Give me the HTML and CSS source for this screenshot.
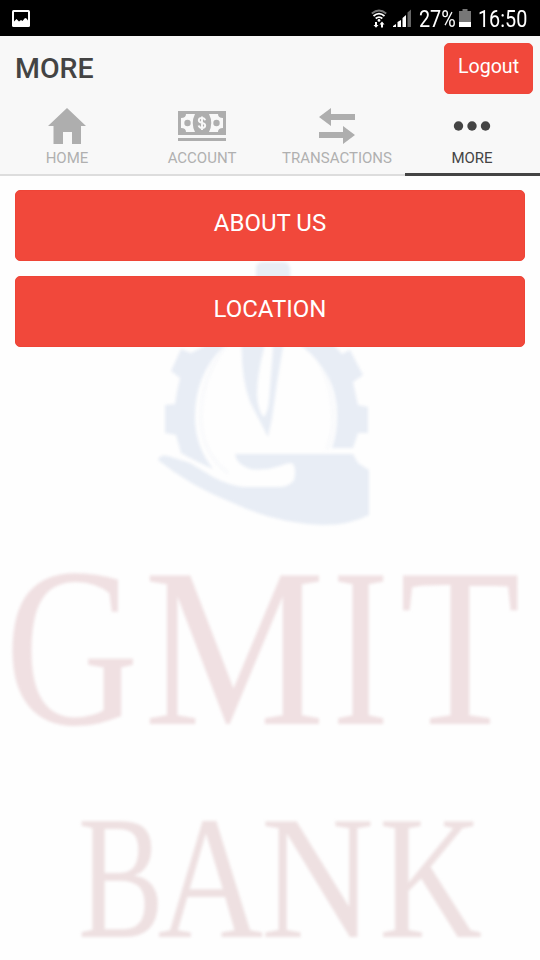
FILE: index.html
```html
<!DOCTYPE html>
<html lang="en">
<head>
<meta charset="utf-8">
<title>GMIT Bank</title>
<link rel="stylesheet" href="styles.css">
</head>
<body>
<div class="statusbar">
  <svg class="photo" viewBox="0 0 18 18"><rect x="0" y="0" width="18" height="17" rx="1.5" fill="#fff"/><path d="M2 2h14v8.500l-1.500-2L13 8l-2.500 3-1.500-1-2 1.500L4.500 9 2 11.500z" fill="#000"/></svg>
  <div class="status-right">
    <svg class="wifi" viewBox="0 0 16 19"><g fill="none"><path d="M.8 4.500Q8-1.500 15.200 4.500" stroke="#777" stroke-width="1.800"/><path d="M2.500 7Q8 2.300 13.500 7M4.700 9.500Q8 6.700 11.300 9.500" stroke="#fff" stroke-width="1.800"/></g><g fill="#fff"><circle cx="8" cy="11.400" r="1.400"/><path d="M4 13h2v3h1.500L5 18.800 2.500 16H4zM10 18.500h2v-3h1.500L11 12.600 8.500 15.500H10z"/></g></svg>
    <svg class="signal" viewBox="0 0 19 18"><g fill="#fff"><path d="M0 18v-1l3-2v3zM4.500 18v-5l3.500-2v7zM9.500 18V9L13 6v12z"/></g><path d="M14.500 18V3.500L18 .500V18z" fill="#666"/></svg>
    <span class="percent">27%</span>
    <svg class="battery" viewBox="0 0 12 18"><path d="M3.500 0h5v2H12v11H0V2h3.500z" fill="#777"/><path d="M0 13h12v5H0z" fill="#fff"/></svg>
    <span class="clock">16:50</span>
  </div>
</div>
<header class="header">
  <h1 class="title">MORE</h1>
  <button class="logout">Logout</button>
</header>
<nav class="tabs">
  <a class="tab">
    <svg class="icon" viewBox="0 0 54 40"><path d="M27 2 46 20H41V38H32V26H23V38H13.500V20H8z" fill="#aeaeae"/></svg>
    <span>HOME</span>
  </a>
  <a class="tab">
    <svg class="icon" viewBox="0 0 54 40"><path d="M3 5h48v24H3zM3 32h48v3H3z" fill="#aeaeae"/><path d="M11 8h9q-4.500 9 0 18h-9q0-4-5-4v-10q5 0 5-4zM43 8h-9q4.500 9 0 18h9q0-4 5-4v-10q-5 0-5-4z" fill="#f8f8f8"/><circle cx="12.500" cy="17" r="3.200" fill="#aeaeae"/><circle cx="41.500" cy="17" r="3.200" fill="#aeaeae"/><path d="M30.200 14.300q-.8-2.400-3.200-2.400-3.200 0-3.200 2.400 0 1.900 3.200 2.600t3.200 2.700q0 2.400-3.200 2.400-2.700 0-3.400-2.400M27 10.500v13.500" fill="none" stroke="#f8f8f8" stroke-width="1.900"/></svg>
    <span>ACCOUNT</span>
  </a>
  <a class="tab">
    <svg class="icon" viewBox="0 0 54 40"><path d="M9 11 21 2v6h24v6H21v6zM45 29 33 20v6H9v6h24v6z" fill="#aeaeae"/></svg>
    <span>TRANSACTIONS</span>
  </a>
  <a class="tab active">
    <svg class="icon" viewBox="0 0 54 40"><g fill="#444"><circle cx="13.500" cy="20" r="4.700"/><circle cx="27" cy="20" r="4.700"/><circle cx="40.500" cy="20" r="4.700"/></g></svg>
    <span>MORE</span>
  </a>
</nav>
<main class="content">
  <svg class="watermark" viewBox="0 176 540 784">
    <g class="emblem">
      <path class="ring" d="M228 473Q201 452 201 417 201 375 228 343M306 343Q333 375 333 417 333 435 327 449"/>
      <path d="M256 290V267Q257 262 263 262H283Q288 262 290 267L291 290z"/>
      <path d="M203 347 191 353 181 349 171 371 180 378Q177 390 175 404L165 405V433L176 435 181 453Q195 461 213 469Q195 446 195 417Q195 375 223 347L240 335H290L303 347Q338 375 337 417 337 433 332 448H353L358 433H368V407L358 405 353 382 363 375 350 350 342 354 332 343 300 325H235z"/>
      <path fill-rule="evenodd" d="M242 335Q240 375 250 402L268 437 272 418 277 383 285 335zM264 335V348Q257 375 257 395 258 412 264 417 268 412 269 400L273 348V335z"/>
      <path d="M158 460Q160 454 168 456L190 463 213 477Q228 485 243 487H280Q289 487 294 480 297 468 292 463 286 463 280 466 265 471 250 469 236 464 235 454H353L358 463 369 470V515Q350 525 323 525 275 523 233 503 190 486 158 460z"/>
    </g>
    <text class="name" y="724"><tspan x="5" textLength="133.800" lengthAdjust="spacingAndGlyphs">G</tspan><tspan x="144" textLength="181" lengthAdjust="spacingAndGlyphs">M</tspan><tspan x="332" textLength="57.200" lengthAdjust="spacingAndGlyphs">I</tspan><tspan x="399.600" textLength="121.100" lengthAdjust="spacingAndGlyphs">T</tspan></text>
    <text class="name kind" y="937"><tspan x="78" textLength="86" lengthAdjust="spacingAndGlyphs">B</tspan><tspan x="157.800" textLength="105.500" lengthAdjust="spacingAndGlyphs">A</tspan><tspan x="261" textLength="113" lengthAdjust="spacingAndGlyphs">N</tspan><tspan x="379" textLength="103" lengthAdjust="spacingAndGlyphs">K</tspan></text>
  </svg>
  <button class="action">ABOUT US</button>
  <button class="action">LOCATION</button>
</main>
</body>
</html>
```
FILE: styles.css
```css
* { box-sizing: border-box; }
body {
  margin: 0;
  height: 960px;
  display: flex;
  flex-direction: column;
  overflow: hidden;
  background: #fefefe;
  font-family: Roboto, sans-serif;
}
.statusbar {
  height: 36px;
  padding: 0 14px 0 12px;
  display: flex;
  align-items: center;
  justify-content: space-between;
  background: #000;
  color: #fff;
  font-size: 23px;
}
.photo { width: 18px; height: 18px; margin-top: 1px; }
.status-right { display: flex; align-items: center; }
.wifi { width: 16px; height: 19px; margin-right: 6px; }
.signal { width: 19px; height: 18px; margin-right: 7px; }
.percent { width: 36px; margin-right: 4px; transform: scaleX(.86); transform-origin: left; }
.battery { width: 12px; height: 18px; margin-right: 7px; }
.clock { width: 48px; transform: scaleX(.86); transform-origin: left; }
.percent, .clock { line-height: 36px; padding-top: 3px; white-space: nowrap; }
.header {
  height: 64px;
  padding: 7px 7px 0 15px;
  display: flex;
  justify-content: space-between;
  background: #f8f8f8;
}
.title {
  margin: 0;
  font-size: 28.5px;
  font-weight: 500;
  line-height: 51px;
  color: #444;
}
.logout {
  width: 89px;
  height: 51px;
  padding: 0 0 4px;
  border: 1px solid #ef473a;
  border-radius: 5px;
  background: #f1483b;
  color: #fff;
  font: 19.6px Roboto, sans-serif;
}
.tabs {
  height: 76px;
  display: grid;
  grid-template-columns: repeat(4, 1fr);
  background: #f8f8f8;
}
.tab {
  display: flex;
  flex-direction: column;
  align-items: center;
  padding: 6px 1px 0 0;
  border-bottom: 2px solid #ddd;
  color: #b0b0b0;
  font-size: 15px;
  line-height: 24px;
}
.tab.active { color: #444; border-bottom: 3px solid #444; }
.icon { width: 54px; height: 40px; }
.content {
  position: relative;
  flex: 1;
  display: flex;
  flex-direction: column;
  gap: 15px;
  padding: 14px 15px;
}
.watermark {
  position: absolute;
  inset: 0;
  width: 540px;
  height: 784px;
  filter: blur(1.5px);
}
.emblem { fill: #e8edf5; }
.ring { fill: none; stroke: #f8f9fb; stroke-width: 3px; }
.name { font: 226px "Liberation Serif", serif; fill: #f0e0e2; }
.kind { font-size: 176px; fill: #eee0e1; }
.action {
  position: relative;
  height: 71px;
  padding: 0 0 6px;
  border: 1px solid #ee4436;
  border-radius: 5px;
  background: #f1483b;
  color: #fff;
  font: 24px Roboto, sans-serif;
}
```
